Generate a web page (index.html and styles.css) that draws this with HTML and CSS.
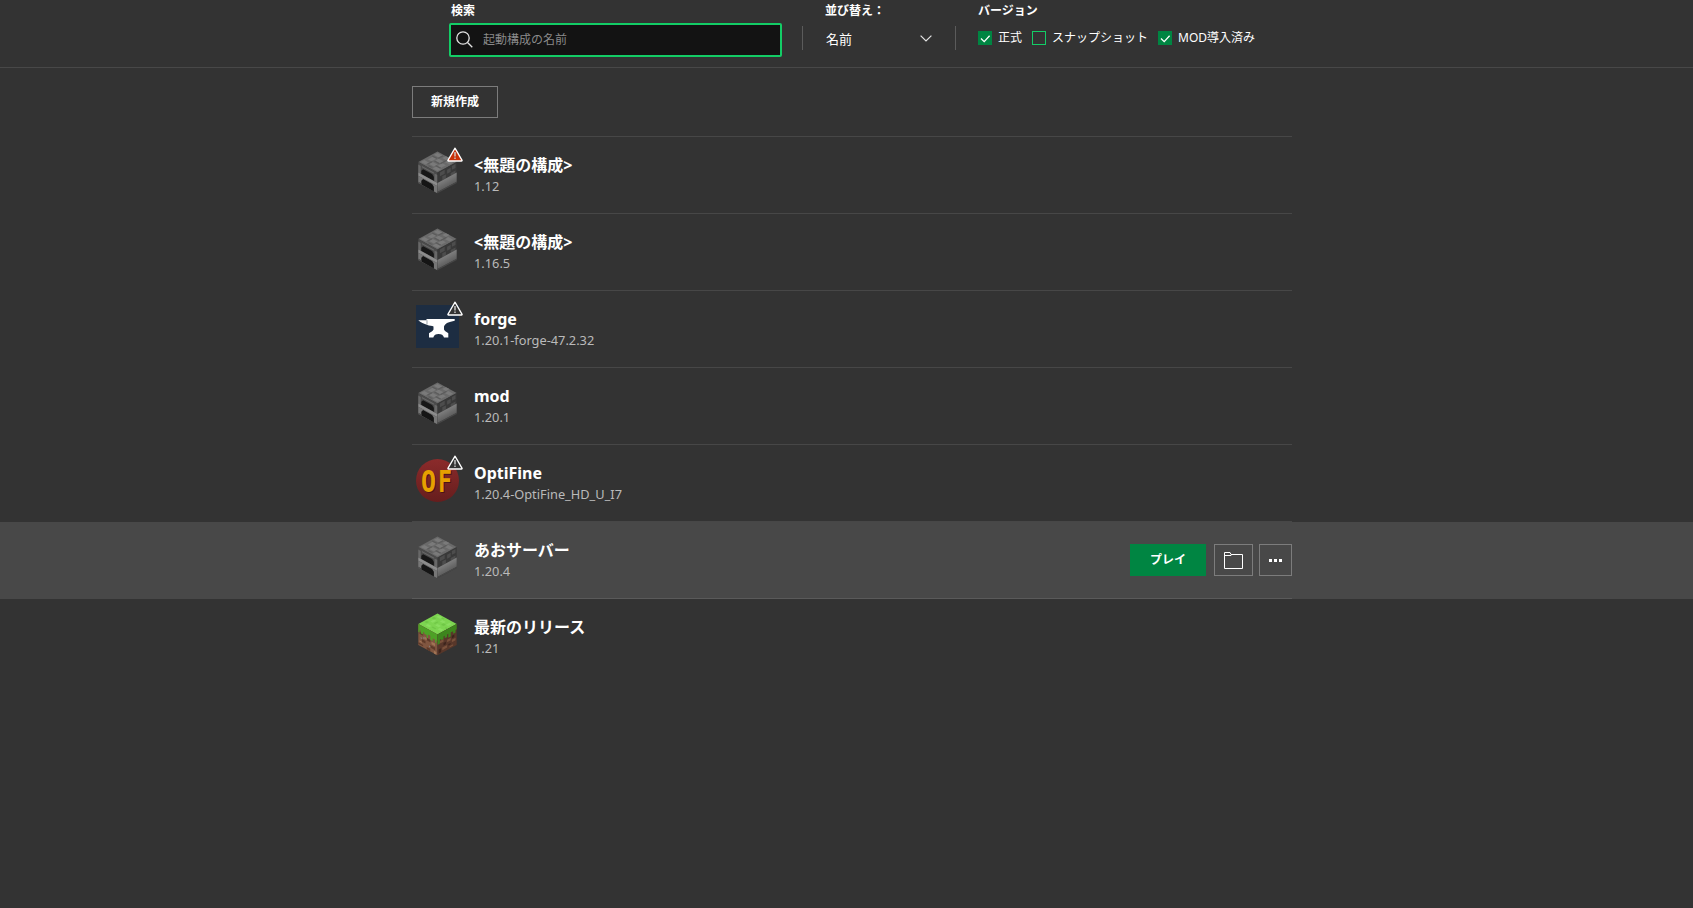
FILE: index.html
```html
<!DOCTYPE html>
<html lang="ja">
<head>
<meta charset="utf-8">
<title>起動構成</title>
<link rel="stylesheet" href="styles.css">
</head>
<body>
<svg class="defs" aria-hidden="true">
  <defs>
    <linearGradient id="smooth" x1="0" y1="0" x2="0" y2="1"><stop offset="0" stop-color="#7e7e7e"/><stop offset="1" stop-color="#5e5e5e"/></linearGradient>
    <linearGradient id="red" x1="0" y1="0" x2="0" y2="1"><stop offset="0" stop-color="#8b2b2b"/><stop offset="1" stop-color="#661d1d"/></linearGradient>
    <symbol id="furnace" viewBox="0 0 43 43">
      <g transform="matrix(1.2 .65 -1.2 .65 21.5 .6)">
        <path fill="#6a6a6a" d="M0 0h16v16H0z"/>
        <path fill="#7a7a7a" d="M1 1h4v3H1zM7 0h3v3H7zM11 2h4v3h-4zM2 6h3v4H2zM6 5h4v3H6zM11 7h3v4h-3zM6 10h4v3H6zM1 12h4v3H1zM11 12h4v3h-4z"/>
        <path fill="#5c5c5c" d="M5 1h1v4H5zM1 5h4v1H1zM10 3h1v5h-1zM6 8h4v1H6zM5 10h1v4H5zM10 11h4v1h-4zM7 14h3v1H7z"/>
      </g>
      <g transform="matrix(1.2 .65 0 1.31 2.3 11)">
        <path fill="#4b4b4b" d="M0 0h16v16H0z"/>
        <path fill="#686868" d="M0 2h2v6H0zM13.500 2h2.500v6h-2.500zM3 1.500h10v1H3z"/>
        <path fill="#171717" d="M2.500 8V5.500L4 3.500h7.500L13 5v3z"/>
        <path fill="#8c8c8c" d="M0 8h16v2.500H0z"/>
        <path fill="#777" d="M0 10.500h16V16H0z"/>
        <path fill="#151515" d="M2.500 16v-3l1.500-2h7.500l1.500 1.500V16z"/>
        <path fill="#444" d="M0 15h2.500v1H0z"/>
      </g>
      <g transform="matrix(1.2 -.65 0 1.31 21.5 21.4)">
        <path fill="#393939" d="M0 0h16v16H0z"/>
        <path fill="#4d4d4d" d="M2 1h4v3H2zM8 2h3v3H8zM12 1h3v3h-3zM4 5h3v3H4zM11 6h4v2h-4z"/>
        <path fill="url(#smooth)" d="M0 8h16v7H0z"/>
        <path fill="#484848" d="M0 15h16v1H0z"/>
      </g>
    </symbol>
    <symbol id="grass" viewBox="0 0 43 43">
      <g transform="matrix(1.2 .65 -1.2 .65 21.5 .6)">
        <path fill="#7dd551" d="M0 0h16v16H0z"/>
        <path fill="#8ade60" d="M2 1h3v2H2zM7 3h3v2H7zM12 2h2v3h-2zM3 6h2v3H3zM8 8h3v2H8zM12 10h3v2h-3zM4 12h3v2H4z"/>
        <path fill="#70c747" d="M5 1h2v1H5zM1 4h2v2H1zM10 5h2v2h-2zM6 6h1v3H6zM1 10h2v2H1zM8 12h3v1H8zM14 7h2v1h-2z"/>
      </g>
      <g transform="matrix(1.2 .65 0 1.31 2.3 11)">
        <path fill="#805640" d="M0 0h16v16H0z"/>
        <path fill="#5e3a29" d="M1 5h3v2H1zM7 7h3v2H7zM3 10h3v2H3zM10 11h4v2h-4zM0 14h4v1H0zM7 14h3v2H7z"/>
        <path fill="#a17455" d="M5 7h2v2H5zM11 8h3v2h-3zM1 12h2v1H1zM13 14h2v2h-2z"/>
        <path fill="#858080" d="M4 8h1v1H4zM9 12h1v1H9zM2 9h1v1H2z"/>
        <path fill="#4da126" d="M0 0h16v5h-1v2h-1V5h-2v2h-2V4H8v3H7V5H5V4H4v2H2V4H1v2H0z"/>
      </g>
      <g transform="matrix(1.2 -.65 0 1.31 21.5 21.4)">
        <path fill="#58372a" d="M0 0h16v16H0z"/>
        <path fill="#7a513b" d="M2 6h3v2H2zM8 8h3v2H8zM4 12h4v2H4zM12 10h3v2h-3zM10 14h3v1h-3z"/>
        <path fill="#3d251c" d="M5 9h2v2H5zM12 7h2v2h-2zM1 12h2v3H1zM9 12h2v1H9z"/>
        <path fill="#3d861d" d="M0 0h16v4h-1v2h-2V4h-2v3H9V4H8v2H6V4H5v2H3V5H2v3H0z"/>
      </g>
    </symbol>
    <symbol id="anvil" viewBox="0 0 43 43">
      <path fill="#1d2d42" d="M0 0h43v43H0z"/>
      <path fill="#fff" d="M2.300 15.200H10.500V14H38.700V15.800C33 16.800 29 18.500 28 21.500V24.500C28.500 26 30.500 27 32.300 28.200V32.500H28C27.300 30 25.500 29 22.600 29S18 30 17.300 32.500H13V28.200C15 27 17 26 17.500 24.500V21.500C16.500 20.800 13 20.800 11.500 20C8 18.800 4.500 17.500 2.300 15.200z"/>
      <path fill="#1d2d42" d="M10.600 15.300h.8v4.300h-.8z" opacity=".55"/>
    </symbol>
    <symbol id="optifine" viewBox="0 0 43 43">
      <circle cx="21.500" cy="21.500" r="21.500" fill="url(#red)"/>
      <g font-family="DejaVu Sans Mono, monospace" font-weight="700" font-size="29">
        <text transform="translate(6 34) scale(.86 1.060)" fill="#4b1515">O</text>
        <text transform="translate(23 34) scale(.8 1.040)" fill="#4b1515">F</text>
        <text transform="translate(5 32.500) scale(.86 1.060)" fill="#e6a000">O</text>
        <text transform="translate(22 32.500) scale(.8 1.040)" fill="#e6a000">F</text>
      </g>
    </symbol>
    <symbol id="warn" viewBox="0 0 16 15">
      <path d="M8 1.200 15.100 13.300Q15.200 14 14.500 14H1.500Q.8 14 .9 13.300z" stroke="#fff" stroke-width="1.300" stroke-linejoin="round"/>
      <path d="M7.300 5h1.400v4.500H7.300zM7.300 10.500h1.400V12H7.300z" fill="#ccc"/>
    </symbol>
    <symbol id="check" viewBox="0 0 14 14"><path d="M3 7.500 6.200 10.600 11.600 4.800" fill="none" stroke="#fff" stroke-width="1.300"/></symbol>
  </defs>
</svg>

<header class="filters">
  <div class="search">
    <div class="label">検索</div>
    <div class="search-box">
      <svg class="search-icon" viewBox="0 0 17 17"><circle cx="7" cy="7" r="6.200"/><path d="m11.500 11.500 4.800 4.800"/></svg>
      <span>起動構成の名前</span>
    </div>
  </div>
  <div class="divider"></div>
  <div class="sort">
    <div class="label">並び替え：</div>
    <div class="select"><span>名前</span><svg class="chevron" viewBox="0 0 12 7"><path d="m.6.600 5.400 5.400L11.400.6"/></svg></div>
  </div>
  <div class="divider"></div>
  <div class="versions">
    <div class="label">バージョン</div>
    <div class="checks">
      <span class="box on"><svg><use href="#check"/></svg></span><span class="check-text regular">正式</span>
      <span class="box"></span><span class="check-text snapshot">スナップショット</span>
      <span class="box on"><svg><use href="#check"/></svg></span><span class="check-text modded">MOD導入済み</span>
    </div>
  </div>
</header>

<main>
  <div class="toolbar"><div class="button new">新規作成</div></div>
  <div class="list">
    <div class="row"><div class="entry first">
      <div class="icon"><svg class="block"><use href="#furnace"/></svg><svg class="badge error"><use href="#warn"/></svg></div>
      <div class="text"><div class="name">&lt;無題の構成&gt;</div><div class="version">1.12</div></div>
    </div></div>
    <div class="row"><div class="entry">
      <div class="icon"><svg class="block"><use href="#furnace"/></svg></div>
      <div class="text"><div class="name">&lt;無題の構成&gt;</div><div class="version">1.16.5</div></div>
    </div></div>
    <div class="row"><div class="entry">
      <div class="icon"><svg><use href="#anvil"/></svg><svg class="badge"><use href="#warn"/></svg></div>
      <div class="text"><div class="name">forge</div><div class="version">1.20.1-forge-47.2.32</div></div>
    </div></div>
    <div class="row"><div class="entry">
      <div class="icon"><svg class="block"><use href="#furnace"/></svg></div>
      <div class="text"><div class="name">mod</div><div class="version">1.20.1</div></div>
    </div></div>
    <div class="row"><div class="entry">
      <div class="icon"><svg><use href="#optifine"/></svg><svg class="badge"><use href="#warn"/></svg></div>
      <div class="text"><div class="name">OptiFine</div><div class="version">1.20.4-OptiFine_HD_U_I7</div></div>
    </div></div>
    <div class="row active"><div class="entry">
      <div class="icon"><svg class="block"><use href="#furnace"/></svg></div>
      <div class="text"><div class="name">あおサーバー</div><div class="version">1.20.4</div></div>
      <div class="actions">
        <div class="button play">プレイ</div>
        <div class="button folder"><svg viewBox="0 0 19 17"><path d="M.5 16.500V.5h5.500l1 2h11.500v14z"/><path d="M.5 3.500h6.500l1-1"/></svg></div>
        <div class="button more"><i></i><i></i><i></i></div>
      </div>
    </div></div>
    <div class="row"><div class="entry last">
      <div class="icon"><svg class="block"><use href="#grass"/></svg></div>
      <div class="text"><div class="name">最新のリリース</div><div class="version">1.21</div></div>
    </div></div>
  </div>
</main>
</body>
</html>
```
FILE: styles.css
```css
* { box-sizing: border-box; }
body {
  margin: 0;
  min-height: 100vh;
  background: #333;
  color: #fff;
  font-family: "Noto Sans", "Noto Sans CJK JP", sans-serif;
  font-size: 12px;
  overflow: hidden;
}
svg { display: block; }
.defs { position: absolute; width: 0; height: 0; }

.filters {
  display: flex;
  height: 68px;
  padding-left: 449px;
  border-bottom: 1px solid #484848;
}
.label {
  height: 23px;
  padding-left: 2px;
  line-height: 22px;
  font-weight: 700;
  white-space: nowrap;
}
.search { width: 333px; }
.search-box {
  display: flex;
  align-items: center;
  height: 34px;
  padding: 0 0 1px 5px;
  border: 2px solid #13cd66;
  border-radius: 2px;
  background: #131313;
  color: #8a8a8a;
}
.search-icon { width: 17px; height: 17px; margin-right: 10px; fill: none; stroke: #e4e4e4; stroke-width: 1.3; }
.search-box span { line-height: 16px; }
.divider { width: 1px; height: 24px; margin: 26px 0 0 20px; background: #5b5b5b; }
.sort { width: 132px; padding-left: 20px; }
.select {
  display: flex;
  align-items: center;
  justify-content: space-between;
  height: 30px;
  padding: 0 3px;
  font-size: 13px;
}
.chevron { width: 12px; height: 7px; fill: none; stroke: #e4e4e4; stroke-width: 1.2; }
.sort + .divider { margin-left: 20px; }
.versions { padding-left: 22px; }
.versions .label { padding-left: 0; }
.checks { display: flex; align-items: center; height: 30px; white-space: nowrap; }
.box { width: 14px; height: 14px; border: 1px solid #13cd66; flex: none; }
.box.on { border: 0; background: #008542; }
.box svg { width: 14px; height: 14px; }
.check-text { margin-left: 6px; line-height: 16px; }
.regular { width: 34px; }
.snapshot { width: 106px; }

.toolbar { height: 69px; padding: 18px 0 0 412px; }
.button {
  display: flex;
  align-items: center;
  justify-content: center;
  height: 32px;
  border: 1px solid #7c7c7c;
  font-weight: 700;
  line-height: 16px;
  padding-bottom: 1px;
}
.new { width: 86px; }
.row { padding: 0 401px 0 412px; }
.row.active { background: #484848; }
.entry {
  display: flex;
  height: 77px;
  padding: 14px 0 0 4px;
  border-bottom: 1px solid rgba(255, 255, 255, .1);
}
.entry.first { height: 78px; border-top: 1px solid rgba(255, 255, 255, .1); margin-top: -1px; }
.entry.last { border-bottom: 0; }
.icon { position: relative; width: 43px; height: 43px; }
.icon > svg { width: 43px; height: 43px; }
.icon > .block { filter: blur(.35px); }
.icon > .badge { position: absolute; left: 31px; top: -4px; width: 16px; height: 15px; fill: #333; }
.icon > .badge.error { fill: #c93208; }
.text { padding-left: 15px; white-space: nowrap; }
.name { height: 25px; line-height: 28px; font-size: 16px; font-weight: 700; }
.version { height: 18px; line-height: 20px; font-size: 12.8px; color: #bababa; }
.actions { display: flex; margin: 8px 0 0 auto; }
.play { width: 76px; border: 0; background: #008542; }
.folder { width: 39px; margin-left: 8px; padding: 0; }
.folder svg { width: 19px; height: 17px; fill: none; stroke: #fff; }
.more { width: 33px; margin-left: 6px; padding: 0; gap: 2px; }
.more i { width: 3px; height: 3px; background: #fff; }
```
